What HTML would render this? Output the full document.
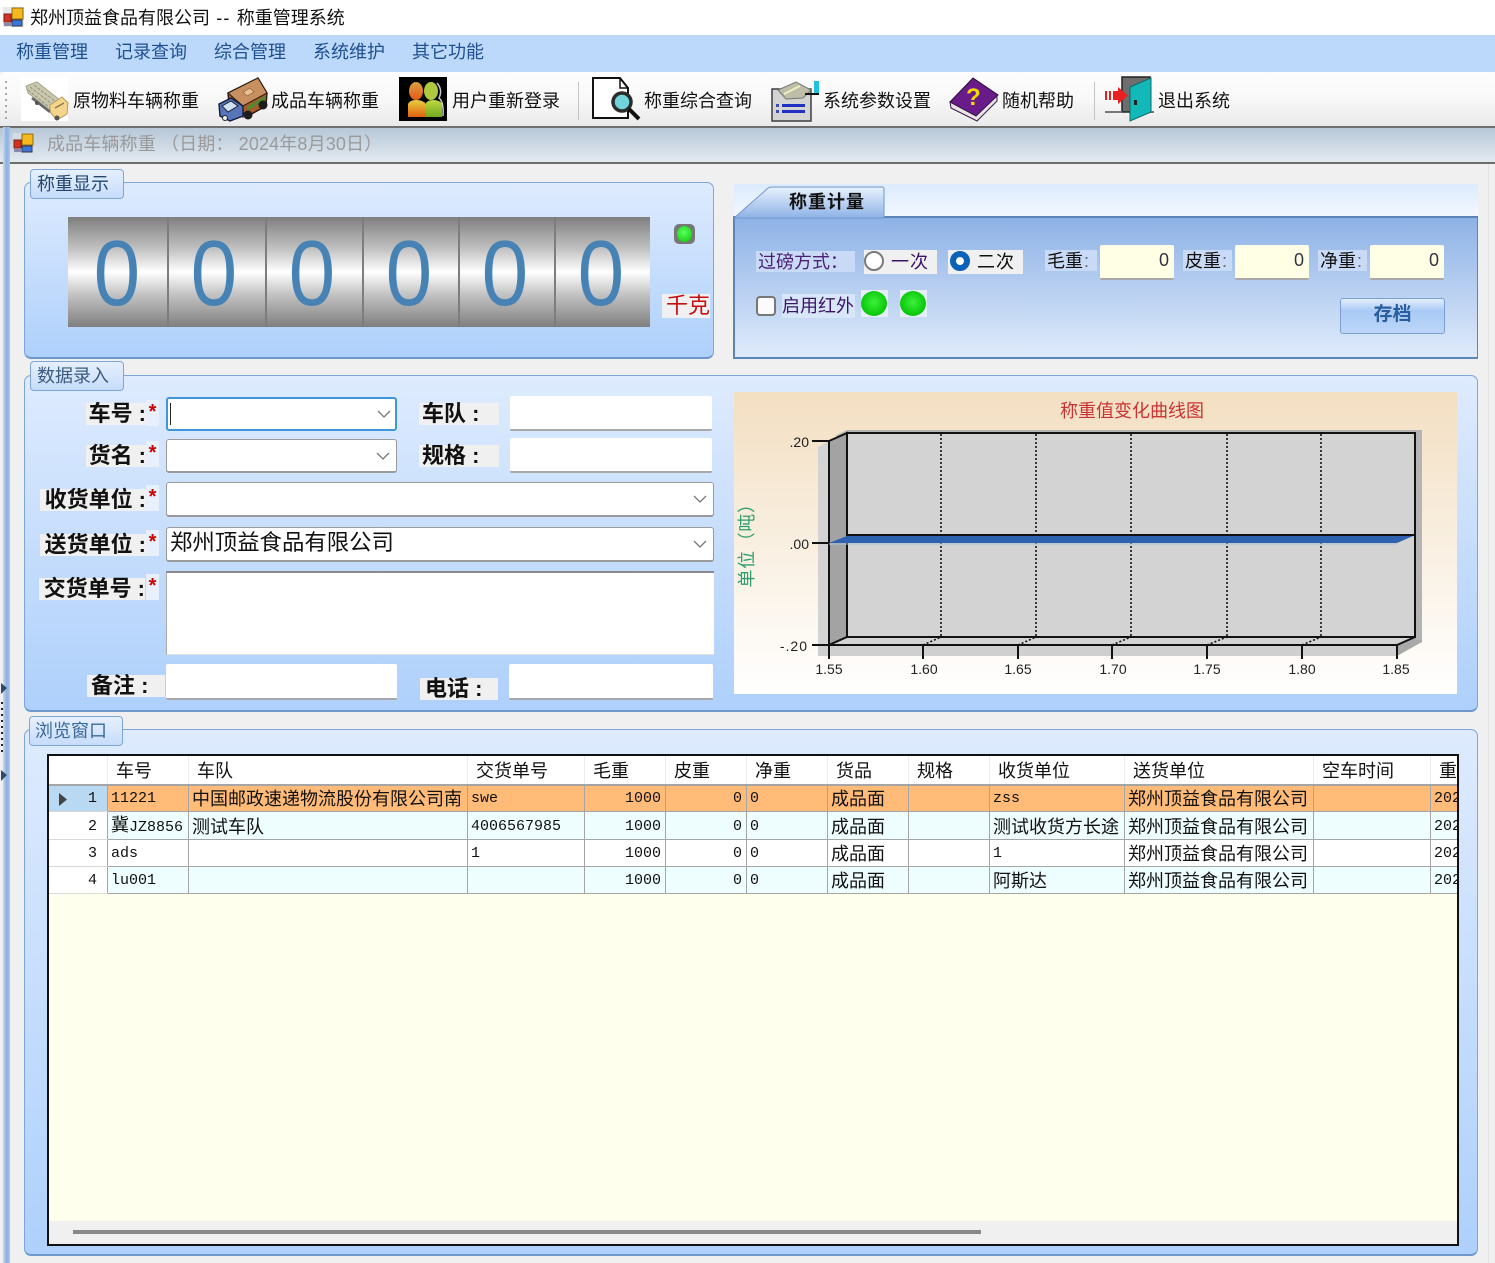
<!DOCTYPE html>
<html lang="zh-CN">
<head>
<meta charset="utf-8">
<title>郑州顶益食品有限公司 -- 称重管理系统</title>
<style>
html,body{margin:0;padding:0;background:#f0f0f0}
body{position:relative;width:1495px;height:1263px;overflow:hidden;font-family:"Liberation Sans","WenQuanYi Zen Hei","Noto Sans CJK SC",sans-serif;color:#111;filter:blur(.3px)}
.a{position:absolute;box-sizing:border-box}
.t{position:absolute;white-space:nowrap;line-height:1;font-size:18px}
.panel{position:absolute;box-sizing:border-box;border:1px solid #7ea6d8;border-bottom:2px solid #6f97cc;border-radius:7px;background:linear-gradient(#deebfe,#aed0fb)}
.legend{position:absolute;box-sizing:border-box;border:1px solid #7ea6d8;border-radius:4px;background:linear-gradient(#e6f0fe,#c6dcfb);font-size:18px;line-height:28px;padding-left:6px;color:#24466e;white-space:nowrap}
.lab{position:absolute;background:#f0f0f0;font-weight:bold;font-size:22px;line-height:22px;white-space:nowrap;text-align:right;color:#111;height:22px}
.lab i{font-style:normal;margin-left:6px}
.star{position:absolute;background:#e8f0fb;color:#c00;font-weight:bold;font-size:20px;line-height:24px;width:13px;height:26px;text-align:center;font-family:"Liberation Sans",sans-serif}
.combo{position:absolute;box-sizing:border-box;background:#fff;border:1px solid #9a9a9a;border-width:1px 1px 2px 1px;border-radius:3px;font-size:22.4px;line-height:30px;padding-left:3px;white-space:nowrap}
.combo svg{position:absolute;right:6px;top:11px}
.inp{position:absolute;box-sizing:border-box;background:#fff;border-bottom:2px solid #a8a8a8;border-radius:2px}
.dg{position:absolute;top:217px;height:110px;width:97px;text-align:center;font-size:93px;line-height:112px;color:#4682b4}
.dg span{display:inline-block;transform:scaleX(.9)}
.sep{position:absolute;top:217px;height:110px;width:2px;background:#7d7d7d}
.wl{position:absolute;font-size:18px;line-height:22px;white-space:nowrap}
.yb{position:absolute;box-sizing:border-box;background:#ffffe6;border-bottom:2px solid #a8a8a8;border-radius:2px;text-align:right;padding-right:5px;font-size:18px;color:#334;top:245px;height:35px;line-height:31px;width:74px}
table{border-collapse:collapse;table-layout:fixed;width:1482px;font-size:18px}
tr{height:27px}
td,th{border:1px solid #a5a5a5;overflow:hidden;white-space:nowrap;padding:2px 0 0 3px;height:27px;font-weight:normal;text-align:left;line-height:22px;box-sizing:border-box}
th{border-color:#ececec;border-bottom:2px solid #a5a5a5;background:#fff;padding:3px 0 0 8px;height:29px}
td.n{text-align:right;padding:2px 4px 0 0}
.m{font-family:"Liberation Mono",monospace;font-size:15px}
.h{background:#fff;border-color:#d8d8d8;border-right-color:#a5a5a5;text-align:right;padding-right:10px!important}
tr.o td{background:#ffbb77}
tr.c td{background:#eefdfd}
tr.w td{background:#fff}
tr td.h{background:#fff}
tr.o td.h{background:#b9d8f2}
</style>
</head>
<body>

<!-- title bar -->
<div class="a" style="left:0;top:0;width:1495px;height:35px;background:#fff"></div>
<svg class="a" style="left:3px;top:7px" width="21" height="20" viewBox="0 0 21 20"><rect x="0" y="0" width="21" height="20" fill="#e8e8e8"/><rect x="9" y="1" width="11" height="11" fill="#f5b81f" stroke="#8a6a10"/><rect x="1" y="7" width="7" height="8" fill="#d83020" stroke="#7a2018"/><rect x="9" y="13" width="10" height="6" fill="#3a78d8" stroke="#335"/><rect x="1" y="16" width="7" height="3" fill="#88a"/></svg>
<div class="t" style="left:30px;top:9px;color:#111">郑州顶益食品有限公司<span style="letter-spacing:1.2px"> -- </span>称重管理系统</div>

<!-- menu bar -->
<div class="a" style="left:0;top:35px;width:1495px;height:37px;background:#bcd9fc"></div>
<div class="t" style="left:16px;top:43px;color:#1f4f8f">称重管理</div>
<div class="t" style="left:115px;top:43px;color:#1f4f8f">记录查询</div>
<div class="t" style="left:214px;top:43px;color:#1f4f8f">综合管理</div>
<div class="t" style="left:313px;top:43px;color:#1f4f8f">系统维护</div>
<div class="t" style="left:412px;top:43px;color:#1f4f8f">其它功能</div>

<!-- tool bar -->
<div class="a" style="left:0;top:72px;width:1495px;height:56px;background:linear-gradient(#fdfdfd,#f8f8f8 50%,#e9e9e9);border-bottom:2px solid #6e6e6e;border-top-left-radius:5px"></div>
<div class="t" style="left:73px;top:92px">原物料车辆称重</div>
<div class="t" style="left:271px;top:92px">成品车辆称重</div>
<div class="t" style="left:452px;top:92px">用户重新登录</div>
<div class="t" style="left:644px;top:92px">称重综合查询</div>
<div class="t" style="left:823px;top:92px">系统参数设置</div>
<div class="t" style="left:1002px;top:92px">随机帮助</div>
<div class="t" style="left:1158px;top:92px">退出系统</div>

<!-- MDI caption -->
<div class="a" style="left:0;top:128px;width:1495px;height:36px;background:linear-gradient(#b7c8d8,#e2e9f0);border-bottom:2px solid #6e6e6e"></div>
<div class="a" style="left:0;top:164px;width:1495px;height:1099px;background:#f0f0f0"></div>
<div class="a" style="left:3px;top:127px;width:7px;height:1136px;background:linear-gradient(90deg,#c6d9f3,#8db0e0 50%,#a8c4ea)"></div>
<div class="a" style="left:1488px;top:164px;width:1px;height:1099px;background:#e4e4e4"></div>
<svg class="a" style="left:13px;top:133px" width="21" height="20" viewBox="0 0 21 20"><rect x="0" y="0" width="21" height="20" fill="#d4dce4"/><rect x="9" y="1" width="11" height="11" fill="#f5b81f" stroke="#8a6a10"/><rect x="1" y="7" width="7" height="8" fill="#d83020" stroke="#7a2018"/><rect x="9" y="13" width="10" height="6" fill="#3a78d8" stroke="#335"/><rect x="1" y="16" width="7" height="3" fill="#88a"/></svg>
<div class="t" style="left:47px;top:135px;color:#9a9a9a;letter-spacing:.14px">成品车辆称重 （日期： 2024年8月30日）</div>

<!-- 称重显示 -->
<div class="panel" style="left:24px;top:182px;width:690px;height:177px"></div>
<div class="legend" style="left:30px;top:169px;width:94px;height:30px">称重显示</div>
<div class="a" style="left:68px;top:217px;width:582px;height:110px;background:linear-gradient(#7f7f7f,#c4c4c4 30%,#fff 50%,#c4c4c4 70%,#7f7f7f)"></div>
<div class="dg" style="left:68px"><span>0</span></div>
<div class="dg" style="left:165px"><span>0</span></div>
<div class="dg" style="left:263px"><span>0</span></div>
<div class="dg" style="left:360px"><span>0</span></div>
<div class="dg" style="left:456px"><span>0</span></div>
<div class="dg" style="left:552px"><span>0</span></div>
<div class="sep" style="left:167px"></div>
<div class="sep" style="left:265px"></div>
<div class="sep" style="left:362px"></div>
<div class="sep" style="left:458px"></div>
<div class="sep" style="left:554px"></div>
<div class="a" style="left:674px;top:224px;width:21px;height:20px;background:#777;border-radius:5px"></div>
<div class="a" style="left:677px;top:226px;width:15px;height:16px;border-radius:50%;background:radial-gradient(circle at 45% 40%,#5cff5c,#00c800)"></div>
<div class="a" style="left:662px;top:294px;width:48px;height:24px;background:#f0f0f0"></div>
<div class="t" style="left:666px;top:295px;font-size:22px;color:#c41010">千克</div>

<!-- 称重计量 -->
<div class="a" style="left:734px;top:184px;width:744px;height:34px;background:linear-gradient(#dcebfd,#f4f8fe)"></div>
<div class="a" style="left:733px;top:216px;width:745px;height:143px;background:linear-gradient(#8eb2e6,#dfebfb);border:2px solid #5b85b8;border-right-width:1px"></div>
<svg class="a" style="left:734px;top:184px" width="160" height="36"><defs><linearGradient id="tb" x1="0" y1="0" x2="0" y2="1"><stop offset="0" stop-color="#e9f2fd"/><stop offset="1" stop-color="#8eb2e6"/></linearGradient></defs><path d="M0 34 L33 5 Q35 3 38 3 L148 3 Q150 3 150 5 L150 34 Z" fill="url(#tb)" stroke="#6f97cc"/></svg>
<div class="t" style="left:789px;top:193px;font-weight:bold;color:#111;letter-spacing:1px">称重计量</div>

<div class="wl" style="left:756px;top:251px;width:97px;height:21px;background:#c8daf5;color:#4b1f75;padding-left:2px">过磅方式：</div>
<div class="a" style="left:864px;top:250px;width:73px;height:24px;background:#f0f0f0"></div>
<div class="a" style="left:864px;top:251px;width:20px;height:20px;border:2px solid #7a7a7a;border-radius:50%;background:#fff"></div>
<div class="t" style="left:891px;top:253px;color:#3c1466;letter-spacing:1px">一次</div>
<div class="a" style="left:948px;top:250px;width:75px;height:24px;background:#f0f0f0"></div>
<div class="a" style="left:950px;top:251px;width:20px;height:20px;border:6px solid #0a63b8;border-radius:50%;background:#fff"></div>
<div class="t" style="left:977px;top:253px;color:#111;letter-spacing:1px">二次</div>
<div class="wl" style="left:1045px;top:250px;width:50px;height:21px;background:#c8daf5;padding-left:2px">毛重<span style="margin-left:1px;color:#667">:</span></div>
<div class="yb" style="left:1100px">0</div>
<div class="wl" style="left:1183px;top:250px;width:47px;height:21px;background:#c8daf5;padding-left:2px">皮重<span style="margin-left:1px;color:#667">:</span></div>
<div class="yb" style="left:1235px">0</div>
<div class="wl" style="left:1318px;top:250px;width:47px;height:21px;background:#c8daf5;padding-left:2px">净重<span style="margin-left:1px;color:#667">:</span></div>
<div class="yb" style="left:1370px">0</div>

<div class="a" style="left:756px;top:296px;width:20px;height:20px;border:2px solid #777;border-radius:4px;background:#fbfbfb"></div>
<div class="wl" style="left:782px;top:294px;width:73px;height:24px;background:#d8e6f9;color:#3c1466;line-height:24px">启用红外</div>
<div class="a" style="left:861px;top:290px;width:27px;height:27px;background:#e6eef9"></div>
<div class="a" style="left:861px;top:291px;width:26px;height:25px;border-radius:50%;background:radial-gradient(circle at 50% 45%,#3cf03c,#00c000 80%)"></div>
<div class="a" style="left:900px;top:290px;width:27px;height:27px;background:#e6eef9"></div>
<div class="a" style="left:900px;top:291px;width:26px;height:25px;border-radius:50%;background:radial-gradient(circle at 50% 45%,#3cf03c,#00c000 80%)"></div>
<div class="a" style="left:1340px;top:298px;width:105px;height:36px;border:1px solid #7a9fd0;border-radius:3px;background:linear-gradient(#e3eefc,#a9caf5 35%,#bcd6f8);text-align:center;font-weight:bold;font-size:19px;line-height:32px;color:#2a5f9e">存档</div>

<!-- 数据录入 -->
<div class="panel" style="left:24px;top:375px;width:1454px;height:337px"></div>
<div class="legend" style="left:30px;top:361px;width:94px;height:30px;color:#3a5a80">数据录入</div>

<div class="lab" style="left:86px;top:403px;width:60px"><span style="position:absolute;right:0;top:0">车号<i>:</i></span></div>
<div class="star" style="left:146px;top:400px">*</div>
<div class="combo" style="left:166px;top:397px;width:231px;height:34px;border:2px solid #3f97d8;border-radius:3px"><div class="a" style="left:2px;top:4px;width:1px;height:22px;background:#222"></div><svg style="top:10px;right:4px" width="14" height="10"><path d="M1 2 L7 8 L13 2" fill="none" stroke="#777" stroke-width="1.3"/></svg></div>
<div class="lab" style="left:419px;top:403px;width:77px;text-align:left;padding-left:3px">车队 :</div>
<div class="inp" style="left:510px;top:396px;width:202px;height:35px"></div>

<div class="lab" style="left:86px;top:445px;width:60px"><span style="position:absolute;right:0;top:0">货名<i>:</i></span></div>
<div class="star" style="left:146px;top:441px">*</div>
<div class="combo" style="left:166px;top:439px;width:231px;height:34px"><svg width="14" height="10"><path d="M1 2 L7 8 L13 2" fill="none" stroke="#777" stroke-width="1.3"/></svg></div>
<div class="lab" style="left:419px;top:445px;width:77px;text-align:left;padding-left:3px">规格 :</div>
<div class="inp" style="left:510px;top:438px;width:202px;height:35px"></div>

<div class="lab" style="left:40px;top:489px;width:106px"><span style="position:absolute;right:0;top:0">收货单位<i>:</i></span></div>
<div class="star" style="left:146px;top:485px">*</div>
<div class="combo" style="left:166px;top:482px;width:548px;height:35px"><svg width="14" height="10"><path d="M1 2 L7 8 L13 2" fill="none" stroke="#777" stroke-width="1.3"/></svg></div>

<div class="lab" style="left:40px;top:534px;width:106px"><span style="position:absolute;right:0;top:0">送货单位<i>:</i></span></div>
<div class="star" style="left:146px;top:530px">*</div>
<div class="combo" style="left:166px;top:527px;width:548px;height:35px">郑州顶益食品有限公司<svg width="14" height="10"><path d="M1 2 L7 8 L13 2" fill="none" stroke="#777" stroke-width="1.3"/></svg></div>

<div class="lab" style="left:39px;top:578px;width:106px"><span style="position:absolute;right:0;top:0">交货单号<i>:</i></span></div>
<div class="star" style="left:146px;top:574px">*</div>
<div class="a" style="left:166px;top:571px;width:548px;height:84px;background:#fff;border-top:2px solid #8a8a8a;border-left:1px solid #aaa;border-bottom:1px solid #e0e0e0"></div>

<div class="lab" style="left:87px;top:675px;width:78px"><span style="position:absolute;left:4px;top:0">备注 :</span></div>
<div class="inp" style="left:166px;top:664px;width:231px;height:36px"></div>
<div class="lab" style="left:420px;top:678px;width:78px"><span style="position:absolute;left:5px;top:0">电话 :</span></div>
<div class="inp" style="left:509px;top:664px;width:204px;height:36px"></div>

<!-- chart -->
<div class="a" style="left:734px;top:392px;width:723px;height:302px;background:linear-gradient(#f3dfc2,#fff)"></div>

<!-- 浏览窗口 -->
<div class="panel" style="left:24px;top:729px;width:1454px;height:527px"></div>
<div class="legend" style="left:29px;top:716px;width:94px;height:30px;color:#3a6a9a;padding-left:5px">浏览窗口</div>

<div class="a" style="left:47px;top:754px;width:1412px;height:492px;background:#ffffee;border:2px solid #111;overflow:hidden">
<table style="position:absolute;left:-1px;top:-1px">
<colgroup><col style="width:59px"><col style="width:81px"><col style="width:279px"><col style="width:117px"><col style="width:81px"><col style="width:81px"><col style="width:81px"><col style="width:81px"><col style="width:81px"><col style="width:135px"><col style="width:189px"><col style="width:117px"><col style="width:100px"></colgroup>
<tr><th></th><th>车号</th><th>车队</th><th>交货单号</th><th>毛重</th><th>皮重</th><th>净重</th><th>货品</th><th>规格</th><th>收货单位</th><th>送货单位</th><th>空车时间</th><th>重车时间</th></tr>
<tr class="o"><td class="h m" style="position:relative">1<svg style="position:absolute;left:9px;top:6px" width="10" height="15"><path d="M1 1 L9 7.5 L1 14 Z" fill="#444"/></svg></td><td class="m">11221</td><td>中国邮政速递物流股份有限公司南</td><td class="m">swe</td><td class="n m">1000</td><td class="n m">0</td><td class="m">0</td><td>成品面</td><td></td><td class="m">zss</td><td>郑州顶益食品有限公司</td><td></td><td class="m">2024-08-30</td></tr>
<tr class="c"><td class="h m">2</td><td><span>冀</span><span class="m">JZ8856</span></td><td>测试车队</td><td class="m">4006567985</td><td class="n m">1000</td><td class="n m">0</td><td class="m">0</td><td>成品面</td><td></td><td>测试收货方长途</td><td>郑州顶益食品有限公司</td><td></td><td class="m">2024-08-30</td></tr>
<tr class="w"><td class="h m">3</td><td class="m">ads</td><td></td><td class="m">1</td><td class="n m">1000</td><td class="n m">0</td><td class="m">0</td><td>成品面</td><td></td><td class="m">1</td><td>郑州顶益食品有限公司</td><td></td><td class="m">2024-08-30</td></tr>
<tr class="c"><td class="h m">4</td><td class="m">lu001</td><td></td><td></td><td class="n m">1000</td><td class="n m">0</td><td class="m">0</td><td>成品面</td><td></td><td>阿斯达</td><td>郑州顶益食品有限公司</td><td></td><td class="m">2024-08-30</td></tr>
</table>
<div class="a" style="left:0;top:465px;width:1410px;height:23px;background:#f0f0f0"></div>
<div class="a" style="left:24px;top:474px;width:908px;height:4px;background:#888"></div>
</div>

<!-- full-page SVG: icons + chart -->
<svg class="a" style="left:0;top:0" width="1495" height="1263" viewBox="0 0 1495 1263" font-family="'Liberation Sans','WenQuanYi Zen Hei','Noto Sans CJK SC',sans-serif">
  <defs>
    <linearGradient id="g1" x1="0" y1="0" x2="0" y2="1"><stop offset="0" stop-color="#e8d040"/><stop offset="1" stop-color="#e06010"/></linearGradient>
    <linearGradient id="g2" x1="0" y1="0" x2="0" y2="1"><stop offset="0" stop-color="#c0d840"/><stop offset="1" stop-color="#70a820"/></linearGradient>
    <linearGradient id="g3" x1="0" y1="0" x2="0" y2="1"><stop offset="0" stop-color="#d8a040"/><stop offset="1" stop-color="#e85a18"/></linearGradient>
  </defs>
  <!-- toolbar gripper -->
  <g fill="#a8a8a8">
    <rect x="5" y="81" width="2" height="2"/><rect x="5" y="87" width="2" height="2"/><rect x="5" y="93" width="2" height="2"/><rect x="5" y="99" width="2" height="2"/><rect x="5" y="105" width="2" height="2"/><rect x="5" y="111" width="2" height="2"/><rect x="5" y="117" width="2" height="2"/>
  </g>
  <rect x="578" y="82" width="1" height="38" fill="#c4c4c4"/>
  <rect x="1094" y="82" width="1" height="38" fill="#c4c4c4"/>

  <!-- icon 1: pale truck -->
  <rect x="21" y="78" width="47" height="43" fill="#fff"/>
  <path d="M26 86 L37 82 L60 100 L50 110 L28 93 Z" fill="#c9c7ae" stroke="#a8a690"/>
  <path d="M30 87 L52 104 M34 85 L56 102 M28 90 L49 107" stroke="#96927a" stroke-width="1" fill="none" stroke-dasharray="3 1.5"/>
  <path d="M50 105 L62 97 L68 103 L67 114 L57 120 L50 112 Z" fill="#f4d58c" stroke="#b89a5a"/>
  <path d="M55 108 L64 103" stroke="#8a7a50" stroke-width="1.5"/>
  <path d="M32 98 L50 112" stroke="#666" stroke-width="2.5" fill="none"/>
  <circle cx="57" cy="118" r="2.5" fill="#555"/><circle cx="37" cy="103" r="2" fill="#555"/>

  <!-- icon 2: cargo truck -->
  <path d="M228 93 L258 78 L267 93 L266 106 L248 116 L229 104 Z" fill="#a85a28" stroke="#2a1a10" stroke-width="1.4"/>
  <path d="M228 93 L258 78 L267 93 L243 106 Z" fill="#c89060" stroke="#2a1a10"/>
  <path d="M243 92 L250 88 L254 92 L247 96 Z" fill="#e8c090" stroke="#8a5a30" stroke-width=".7"/>
  <path d="M243 106 L243 118" stroke="#2a1a10"/>
  <path d="M247 107 L265 96 L265 100 L247 111 Z" fill="#4f8a30"/>
  <path d="M219 104 L231 98 L243 106 L243 116 L230 121 L220 116 Z" fill="#5575b8" stroke="#141c38" stroke-width="1.4"/>
  <path d="M222 106 L231 101 L238 106 L228 112 Z" fill="#cfe0f5" stroke="#223"/>
  <circle cx="225" cy="118" r="2.5" fill="#eee" stroke="#222"/>
  <circle cx="248" cy="115" r="4.5" fill="#1c1c1c"/><circle cx="263" cy="105" r="4.5" fill="#1c1c1c"/>

  <!-- icon 3: users on black -->
  <rect x="399" y="77" width="48" height="44" fill="#000"/>
  <path d="M426 117 L426 103 Q428 100 433 100 Q440 100 442 104 L442 117 Z" fill="url(#g2)"/>
  <ellipse cx="431" cy="91" rx="7" ry="9" fill="#aec93f"/>
  <path d="M408 117 L408 104 Q410 100 416 100 Q423 100 426 104 L426 117 Z" fill="url(#g1)"/>
  <ellipse cx="416" cy="91" rx="7" ry="9" fill="url(#g3)"/>
  <path d="M437 83 Q443 90 439 98 Q444 102 443 116" stroke="#c8c8c8" stroke-width="1.5" fill="none"/>

  <!-- icon 4: document + magnifier -->
  <path d="M593 78 L620 78 L628 88 L628 118 L593 118 Z" fill="#fff" stroke="#111" stroke-width="2"/>
  <path d="M620 78 L620 88 L628 88" fill="none" stroke="#111" stroke-width="1.5"/>
  <circle cx="622" cy="102" r="9" fill="#70d4da" stroke="#2c2c2c" stroke-width="3.5"/>
  <path d="M629 109 L639 119" stroke="#111" stroke-width="4"/>

  <!-- icon 5: settings -->
  <rect x="772" y="89" width="39" height="32" fill="#d4d4d4" stroke="#333" stroke-width="1.4"/>
  <path d="M778 90 L796 82 L811 90 L803 98 L786 99 Z" fill="#bdbda8" stroke="#777"/>
  <path d="M784 94 L800 86" stroke="#efefc0" stroke-width="2"/>
  <path d="M805 94 L819 94" stroke="#111" stroke-width="2"/>
  <rect x="814" y="81" width="5" height="12" fill="#20c0e0"/>
  <rect x="782" y="104" width="23" height="3" fill="#2030c0"/>
  <rect x="782" y="110" width="23" height="3" fill="#2030c0"/>
  <rect x="776" y="104" width="3" height="3" fill="#3a4ab0"/>
  <rect x="776" y="110" width="3" height="3" fill="#3a4ab0"/>

  <!-- icon 6: book -->
  <path d="M950 102 L973 78 L998 95 L976 116 Z" fill="#6a1b8a" stroke="#2a0a3a"/>
  <path d="M950 102 L976 116 L997 96 L997 101 L977 121 L951 108 Z" fill="#e8e4e8" stroke="#3a1a4a"/>
  <text x="966" y="105" font-size="24" font-weight="bold" fill="#f5d800" font-family="'Liberation Sans',sans-serif">?</text>

  <!-- icon 7: door -->
  <path d="M1122 112 L1122 77 L1150 77 L1150 112 Z" fill="#6e6e6e" stroke="#222" stroke-width="1.5"/>
  <path d="M1105 112 L1122 112 M1150 112 L1154 112" stroke="#777" stroke-width="2"/>
  <path d="M1130 87 L1151 78 L1151 112 L1130 121 Z" fill="#13b8b8" stroke="#0a6a6a"/>
  <rect x="1134" y="100" width="3" height="5" fill="#222"/>
  <rect x="1105" y="91" width="2" height="9" fill="#e82020"/><rect x="1109" y="91" width="2" height="9" fill="#e82020"/><rect x="1113" y="91" width="6" height="9" fill="#e82020"/>
  <path d="M1118 87 L1128 95.5 L1118 104 Z" fill="#e82020"/>

  <!-- left splitter marks -->
  <path d="M1 683 L7 688 L1 694 Z" fill="#334a66"/>
  <path d="M1 770 L7 775 L1 781 Z" fill="#334a66"/>
  <g fill="#222"><rect x="1" y="702" width="2" height="2"/><rect x="1" y="708" width="2" height="2"/><rect x="1" y="714" width="2" height="2"/><rect x="1" y="720" width="2" height="2"/><rect x="1" y="726" width="2" height="2"/><rect x="1" y="732" width="2" height="2"/><rect x="1" y="738" width="2" height="2"/><rect x="1" y="744" width="2" height="2"/><rect x="1" y="750" width="2" height="2"/></g>

  <!-- chart -->
  <text x="1132" y="417" text-anchor="middle" font-size="18" fill="#c83434">称重值变化曲线图</text>
  <!-- shadows -->
  <path d="M818 447 L829 441 L829 645 L818 648 Z" fill="#d3d3d3"/>
  <path d="M818 645 L1397 645 L1397 656 L818 656 Z" fill="#cfcfcf"/>
  <path d="M1397 645 L1415 637 L1422 637 L1422 642 L1397 656 Z" fill="#a9a9a9"/>
  <path d="M835 436 L847 430 L1422 430 L1422 640 L1415 640 L1415 433 Z" fill="#b4b4b4"/>
  <!-- walls -->
  <rect x="847" y="433" width="568" height="204" fill="#d3d3d3" stroke="#111" stroke-width="2"/>
  <path d="M829 441 L847 433 L847 637 L829 645 Z" fill="#a3a3a3" stroke="#111" stroke-width="2"/>
  <path d="M829 645 L847 637 L1415 637 L1397 645 Z" fill="#d3d3d3" stroke="#111" stroke-width="2"/>
  <!-- grid -->
  <g stroke="#111" stroke-width="1.6" stroke-dasharray="2 2">
    <path d="M941 434 V636"/><path d="M1036 434 V636"/><path d="M1131 434 V636"/><path d="M1227 434 V636"/><path d="M1321 434 V636"/><path d="M1415 434 V636"/>
    <path d="M923 645 L941 637"/><path d="M1018 645 L1036 637"/><path d="M1112 645 L1131 637"/><path d="M1207 645 L1227 637"/><path d="M1302 645 L1321 637"/>
  </g>
  <path d="M847 535 H1415" stroke="#111" stroke-width="2"/>
  <path d="M829 543 L847 536 L1413 536 L1397 543 Z" fill="#2e62b0"/>
  <path d="M829 544 H1397" stroke="#a8bcd8" stroke-width="1"/>
  <!-- ticks -->
  <g stroke="#111" stroke-width="2">
    <path d="M812 441 H829"/><path d="M812 543 H829"/><path d="M812 645 H829"/>
    <path d="M829 645 V659"/><path d="M923 645 V659"/><path d="M1018 645 V659"/><path d="M1112 645 V659"/><path d="M1207 645 V659"/><path d="M1302 645 V659"/><path d="M1397 645 V659"/>
  </g>
  <g font-size="14" fill="#222" font-family="'Liberation Sans',sans-serif">
    <text x="809" y="447" text-anchor="end">.20</text>
    <text x="809" y="549" text-anchor="end">.00</text>
    <text x="808" y="651" text-anchor="end" letter-spacing="1">-.20</text>
    <g text-anchor="middle">
      <text x="829" y="674">1.55</text><text x="924" y="674">1.60</text><text x="1018" y="674">1.65</text><text x="1113" y="674">1.70</text><text x="1207" y="674">1.75</text><text x="1302" y="674">1.80</text><text x="1396" y="674">1.85</text>
    </g>
  </g>
  <text transform="translate(753 541) rotate(-90)" text-anchor="middle" font-size="18" fill="#2f9e6e" letter-spacing=".6">单位（吨）</text>
</svg>

</body>
</html>
